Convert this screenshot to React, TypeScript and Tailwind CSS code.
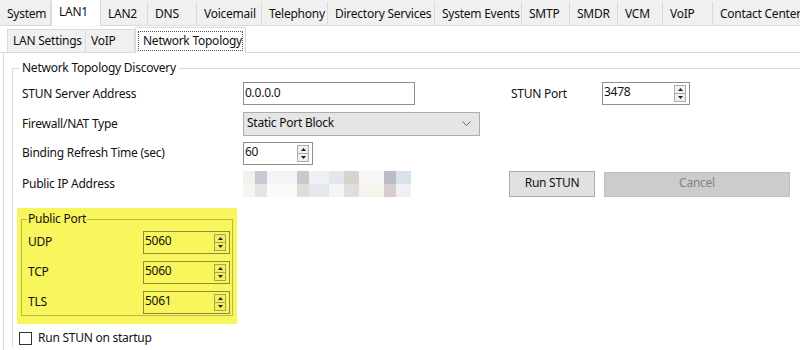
import type { ReactNode } from 'react';

const topTabs = [
  { label: 'System', w: 'w-[51px]' },
  { label: 'LAN1', w: 'w-[50px]', active: true },
  { label: 'LAN2', w: 'w-[47px]' },
  { label: 'DNS', w: 'w-[49px]' },
  { label: 'Voicemail', w: 'w-[65px]' },
  { label: 'Telephony', w: 'w-[66px]' },
  { label: 'Directory Services', w: 'w-[107px]' },
  { label: 'System Events', w: 'w-[87px]' },
  { label: 'SMTP', w: 'w-[48px]' },
  { label: 'SMDR', w: 'w-[48px]' },
  { label: 'VCM', w: 'w-[45px]' },
  { label: 'VoIP', w: 'w-[50px]' },
  { label: 'Contact Center', w: 'w-[100px]' },
];

// blurred public ip mosaic
const mosaic = [
  ['#f2f1ee', '#c8cad3', '#f4f4f6', '#f4f4f6', '#c9c9cb', '#eef0f4', '#e4e6ee', '#d7d3cf', '#f7f7f7', '#bcbcc6', '#d9e1ea'],
  ['#f8f4ef', '#e5e5e5', '#fafafa', '#fafafa', '#e1ded7', '#e4e8ee', '#f5f5f5', '#e0dedf', '#f7f4ee', '#d9ccd0', '#eef0f6'],
];
const mosaicW = ['w-[12px]', 'w-[12px]', 'w-[20px]', 'w-[10px]', 'w-[12px]', 'w-[20px]', 'w-[15px]', 'w-[15px]', 'w-[25px]', 'w-[12px]', 'w-[15px]'];

function Arrow({ up, color }: { up?: boolean; color: string }) {
  return (
    <svg width="5" height="3" viewBox="0 0 5 3">
      <polygon points={up ? '2.5,0 5,3 0,3' : '0,0 5,0 2.5,3'} fill={color} />
    </svg>
  );
}

function SpinBox({ value, width, hl }: { value: string; width: string; hl?: boolean }) {
  const border = hl ? 'border-[#8e8c3c]' : 'border-[#8f8f8f]';
  const btn = hl ? 'border-[#a8a64a] bg-[#f2ee62]' : 'border-[#adadad] bg-[#f0f0f0]';
  return (
    <div className={`flex h-[23px] ${width} items-center justify-between border ${border} ${hl ? 'bg-transparent' : 'bg-white'} pl-[1px] pr-[3px]`}>
      <span className="-mt-[3px]">{value}</span>
      <div className="flex h-[17px] w-[12px] flex-col">
        <div className={`flex flex-1 items-center justify-center border ${btn}`}>
          <Arrow up color="#222" />
        </div>
        <div className={`flex flex-1 items-center justify-center border border-t-0 ${btn}`}>
          <Arrow color="#222" />
        </div>
      </div>
    </div>
  );
}

function Row({ h, children }: { h: string; children: ReactNode }) {
  return <div className={`flex ${h} items-center`}>{children}</div>;
}

export default function App() {
  return (
    <div
      className="h-[350px] w-[800px] overflow-hidden whitespace-nowrap bg-white text-[12px] tracking-[-0.25px] text-[#111]"
      style={{ fontFamily: '"Noto Sans", "Open Sans", sans-serif' }}
    >
      {/* top tab strip */}
      <div className="flex h-[26px] items-end border-b border-[#dadada] bg-[#f0f0f0]">
        {topTabs.map((t) =>
          t.active ? (
            <div key={t.label} className={`${t.w} -mb-[1px] flex h-[26px] shrink-0 items-center border-x border-[#dadada] bg-white pl-[7px] pb-[3px]`}>
              {t.label}
            </div>
          ) : (
            <div key={t.label} className={`${t.w} flex h-[23px] shrink-0 items-center border-r border-[#dadada] pl-[7px]`}>
              {t.label}
            </div>
          ),
        )}
      </div>

      {/* sub tabs */}
      <div className="flex h-[27px] items-end border-b border-[#dadada] pl-[7px]">
        <div className="flex h-[23px] w-[79px] items-center border border-b-0 border-[#dadada] bg-[#f0f0f0] pl-[5px]">LAN Settings</div>
        <div className="flex h-[23px] w-[49px] items-center border-r border-t border-[#dadada] bg-[#f0f0f0] pl-[5px]">VoIP</div>
        <div className="-mb-[1px] flex h-[26px] w-[111px] items-center border-x border-t border-[#dadada] bg-white px-[2px]">
          <div className="flex h-[20px] w-full items-center border border-dotted border-[#555] pl-[4px]">Network Topology</div>
        </div>
      </div>

      {/* panel */}
      <div className="ml-[3px] h-full border-l border-[#dadada] pl-[8px] pt-[7px]">
        <fieldset className="w-[820px] border-l border-t border-[#dcdcdc] pl-[9px] pr-0 pt-[2px]">
          <legend className="-ml-[3px] px-[3px] leading-[16px]">Network Topology Discovery</legend>

          <Row h="h-[31px]">
            <span className="w-[221px]">STUN Server Address</span>
            <div className="flex h-[23px] w-[172px] items-center border border-[#8f8f8f] pl-[1px]">
              <span className="-mt-[2px]">0.0.0.0</span>
            </div>
            <span className="ml-[96px] w-[91px]">STUN Port</span>
            <SpinBox value="3478" width="w-[88px]" />
          </Row>

          <Row h="h-[29px]">
            <span className="w-[221px]">Firewall/NAT Type</span>
            <div className="flex h-[24px] w-[237px] items-center justify-between border border-[#adadad] bg-[#e5e5e5] pl-[3px] pr-[8px]">
              <span className="-mt-[1px]">Static Port Block</span>
              <svg width="9" height="5" viewBox="0 0 9 5">
                <polyline points="0.5,0.5 4.5,4.5 8.5,0.5" fill="none" stroke="#666" strokeWidth="1" />
              </svg>
            </div>
          </Row>

          <Row h="h-[30px]">
            <span className="w-[221px]">Binding Refresh Time (sec)</span>
            <SpinBox value="60" width="w-[70px]" />
          </Row>

          <Row h="h-[32px]">
            <span className="w-[221px]">Public IP Address</span>
            <div className="flex w-[168px] flex-col">
              {mosaic.map((row, i) => (
                <div key={i} className="flex h-[13px]">
                  {row.map((c, j) => (
                    <div key={j} className={`${mosaicW[j]} h-full`} style={{ backgroundColor: c }} />
                  ))}
                </div>
              ))}
            </div>
            <button className="ml-[98px] h-[26px] w-[86px] border border-[#adadad] bg-[#e1e1e1] pb-[2px]">Run STUN</button>
            <button className="ml-[9px] h-[25px] w-[186px] border border-[#bfbfbf] bg-[#cccccc] pb-[2px] text-[#838383]">Cancel</button>
          </Row>

          {/* highlighted public port group */}
          <div className="-ml-[5px] mt-[8px] h-[116px] w-[220px] bg-[#f9f55c] pl-[4px] pt-[3px]">
            <fieldset className="h-[105px] w-[212px] border border-[#bcb84a] pl-[6px]">
              <legend className="-ml-[1px] px-[1px] leading-[16px]">Public Port</legend>
              <div className="flex h-[30px] items-center">
                <span className="w-[115px]">UDP</span>
                <SpinBox value="5060" width="w-[87px]" hl />
              </div>
              <div className="flex h-[30px] items-center">
                <span className="w-[115px]">TCP</span>
                <SpinBox value="5060" width="w-[87px]" hl />
              </div>
              <div className="flex h-[30px] items-center">
                <span className="w-[115px]">TLS</span>
                <SpinBox value="5061" width="w-[87px]" hl />
              </div>
            </fieldset>
          </div>

          <div className="-ml-[3px] mt-[6px] flex items-center gap-[6px]">
            <div className="h-[13px] w-[13px] border border-[#333] bg-white" />
            <span className="-mt-[1px]">Run STUN on startup</span>
          </div>
        </fieldset>
      </div>
    </div>
  );
}
